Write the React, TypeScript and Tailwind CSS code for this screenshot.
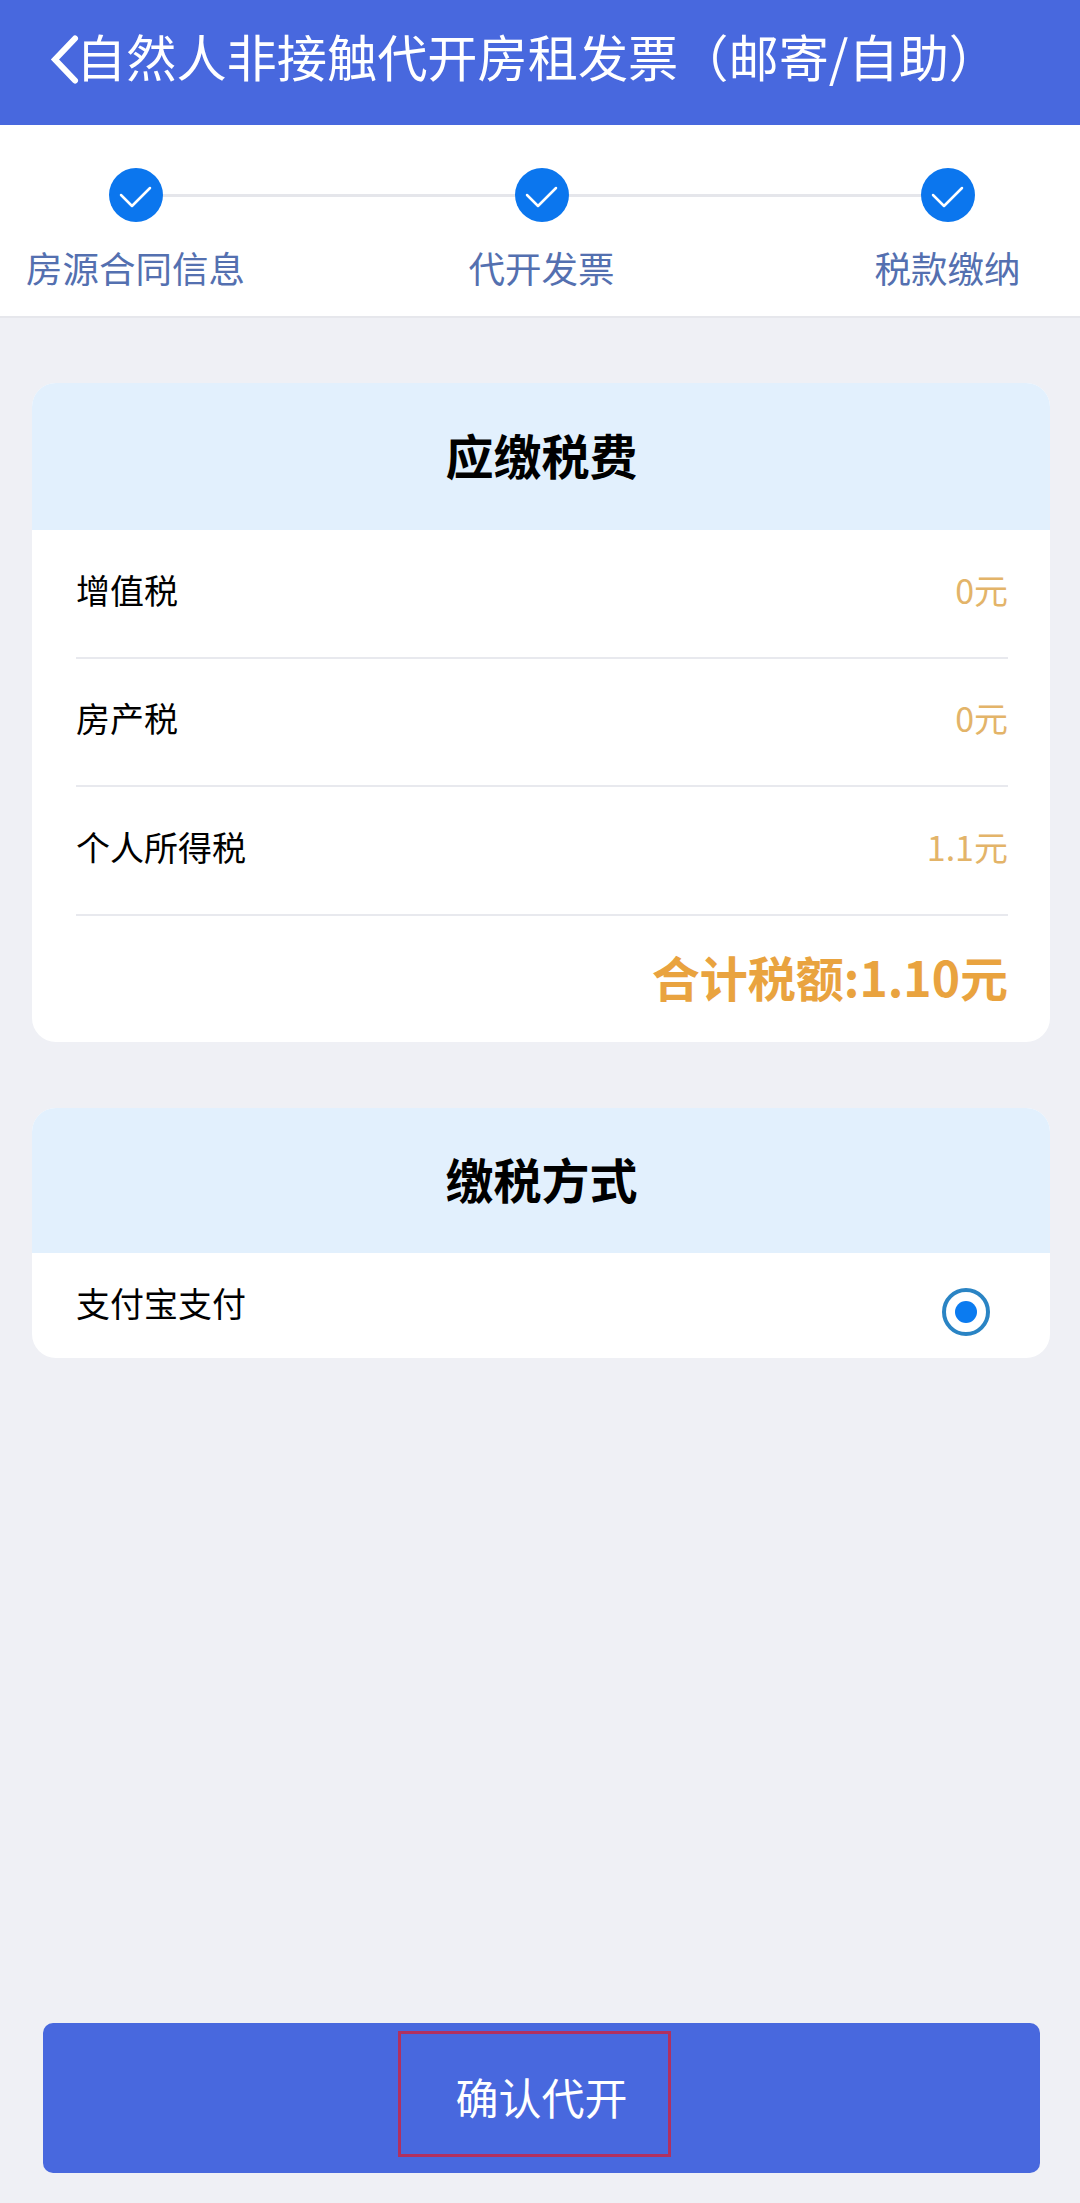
import React from 'react';

const cjk = "font-['Noto_Sans_CJK_SC','PingFang_SC','Liberation_Sans',sans-serif]";

const steps = ['房源合同信息', '代开发票', '税款缴纳'];

const taxRows = [
  { name: '增值税', amount: '0元' },
  { name: '房产税', amount: '0元' },
  { name: '个人所得税', amount: '1.1元' },
];

const StepCheck = () => (
  <div className="relative z-10 flex h-[54px] w-[54px] items-center justify-center rounded-full bg-[#0b76ee]">
    <svg width="54" height="54" viewBox="0 0 54 54" fill="none">
      <path d="M12 27 L23 38 L41 20" stroke="#ffffff" strokeWidth="2.5" strokeLinecap="round" strokeLinejoin="round" />
    </svg>
  </div>
);

const CardHeader = ({ title, height }: { title: string; height: string }) => (
  <div className={`flex items-center justify-center bg-[#e2f0fd] pb-[5px] pl-[1px] text-[48px] font-bold text-black ${height}`}>
    {title}
  </div>
);

export default function App() {
  return (
    <div className={`flex h-[2203px] w-[1080px] flex-col bg-[#eff0f5] ${cjk}`}>
      {/* Header */}
      <div className="flex h-[125px] items-center bg-[#4868de] pb-[14px] pl-[50px] text-white">
        <svg width="26" height="56" viewBox="0 0 26 56" fill="none" className="shrink-0 overflow-visible">
          <path d="M25 10.5 L5 31.5 L25 52.5" stroke="#ffffff" strokeWidth="6" strokeLinecap="round" strokeLinejoin="miter" />
        </svg>
        <span className="whitespace-nowrap text-[50.2px] leading-none">自然人非接触代开房租发票（邮寄/自助）</span>
      </div>

      {/* Steps */}
      <div className="relative flex h-[193px] justify-between border-b-2 border-[#e6e7ec] bg-white pt-[43px] pl-[26px] pr-[23px]">
        <div className="absolute left-[140px] right-[110px] top-[69px] h-[3px] bg-[#e5e6eb]" />
        {steps.map((label) => (
          <div key={label} className="flex w-[219px] flex-col items-center">
            <StepCheck />
            <span className="mt-[24px] whitespace-nowrap text-[36.5px] leading-[44px] text-[#5470b0]">{label}</span>
          </div>
        ))}
      </div>

      {/* Tax card */}
      <div className="ml-[32px] mr-[30px] mt-[65px] overflow-hidden rounded-[24px] bg-white">
        <CardHeader title="应缴税费" height="h-[147px]" />
        <div className="pl-[44px] pr-[42px]">
          {taxRows.map((row) => (
            <div key={row.name} className="flex h-[128.5px] items-center justify-between border-b-2 border-[#e8e9ee] pb-[8px]">
              <span className="text-[34px] text-black">{row.name}</span>
              <span className="text-[34px] text-[#e3b469]">{row.amount}</span>
            </div>
          ))}
          <div className="flex h-[126px] items-center justify-end pb-[6px]">
            <span className="text-[48px] font-bold leading-none text-[#e9a33f]">合计税额:1.10元</span>
          </div>
        </div>
      </div>

      {/* Payment method card */}
      <div className="ml-[32px] mr-[30px] mt-[66px] overflow-hidden rounded-[24px] bg-white">
        <CardHeader title="缴税方式" height="h-[145px]" />
        <div className="flex h-[105px] items-start justify-between pl-[44px] pr-[60px]">
          <span className="mt-[24px] text-[34px] leading-[52px] text-black">支付宝支付</span>
          <div className="mt-[35px] flex h-[48px] w-[48px] items-center justify-center rounded-full border-[4px] border-[#2a84c4]">
            <div className="h-[22px] w-[22px] rounded-full bg-[#0b7bf0]" />
          </div>
        </div>
      </div>

      {/* Confirm button */}
      <div className="mt-auto px-[43px] pb-[30px]">
        <div className="relative flex h-[150px] w-[997px] items-center justify-center rounded-[10px] bg-[#4868de] pb-[4px] text-[43px] text-white">
          确认代开
          <div className="absolute left-[355px] top-[8px] h-[126px] w-[273px] border-[3px] border-[#b1305f]" />
        </div>
      </div>
    </div>
  );
}
